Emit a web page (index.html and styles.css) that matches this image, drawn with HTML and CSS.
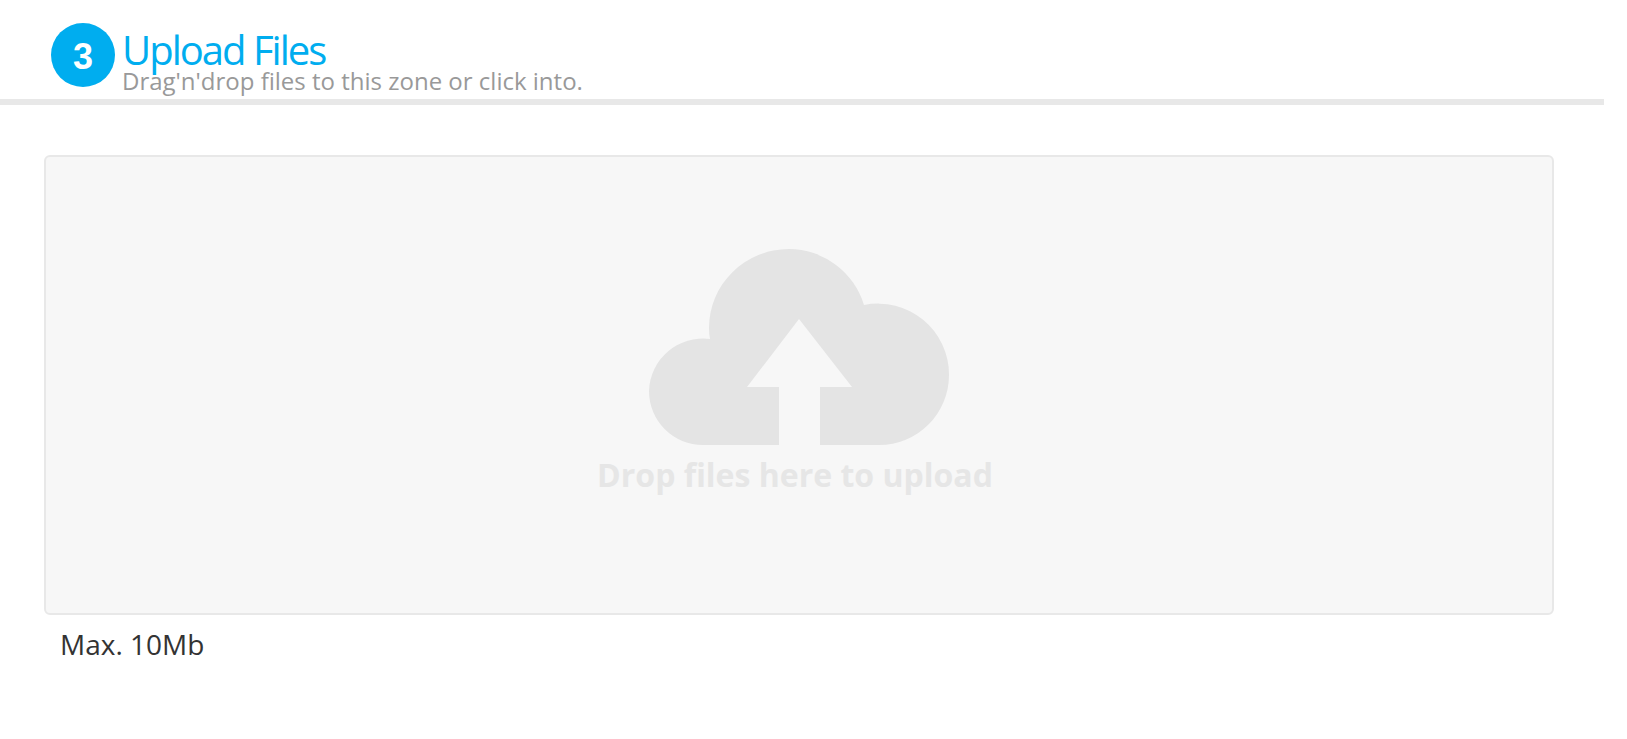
FILE: index.html
```html
<!DOCTYPE html>
<html lang="en">

<head>
    <meta charset="UTF-8">
    <meta name="viewport" content="width=device-width, initial-scale=1.0">
    <title>Upload Files</title>
    <link rel="stylesheet" href="styles.css">
</head>

<body>
    <section class="step">
        <header class="step-header">
            <span class="step-number">3</span>
            <div class="step-heading">
                <h2>Upload Files</h2>
                <p>Drag'n'drop files to this zone or click into.</p>
            </div>
        </header>
        <div class="step-body">
            <label class="dropzone" for="files">
                <input class="file-input" type="file" id="files" name="files" multiple>
                <svg class="cloud" viewBox="0 0 300 196" aria-hidden="true">
                    <path d="M54 196A54 54 0 0 1 0 142A54 54 0 0 1 61 90Q60 85 60 79A80 79 0 0 1 140 0A79 79 0 0 1 215 56A71 71 0 0 1 300 126A70 70 0 0 1 230 196H171V138H203L150 70L98 138H130V196Z"/>
                </svg>
                <span class="dropzone-text">Drop files here to upload</span>
            </label>
            <p class="hint">Max. 10Mb</p>
        </div>
    </section>
    <script>
        const dropzone = document.querySelector(".dropzone");
        const input = document.querySelector(".file-input");

        dropzone.addEventListener("dragover", (e) => e.preventDefault());
        dropzone.addEventListener("drop", (e) => {
            e.preventDefault();
            input.files = e.dataTransfer.files;
        });
    </script>
</body>

</html>
```
FILE: styles.css
```css
body {
    margin: 0;
    font-family: 'Open Sans', sans-serif;
    color: #333;
    background-color: #fff;
}

h2,
p {
    margin: 0;
}

.step {
    margin-right: 23px;
}

.step-header {
    display: flex;
    align-items: flex-start;
    gap: 7px;
    padding: 23px 51px 5px;
    border-bottom: 6px solid #e8e8e8;
}

.step-number {
    flex: none;
    box-sizing: border-box;
    width: 64px;
    height: 64px;
    padding-top: 2px;
    border-radius: 50%;
    font-family: 'Liberation Sans', sans-serif;
    font-size: 36px;
    font-weight: 700;
    line-height: 64px;
    text-align: center;
    color: #fff;
    background-color: #00adef;
}

.step-heading {
    padding-top: 9px;
}

.step-heading h2 {
    font-size: 40px;
    font-weight: 400;
    line-height: 36px;
    letter-spacing: -2px;
    color: #00adef;
}

.step-heading p {
    font-size: 24px;
    line-height: 26px;
    color: #999;
}

.step-body {
    padding: 50px 50px 0 44px;
}

.dropzone {
    display: flex;
    flex-direction: column;
    align-items: center;
    gap: 8px;
    padding: 92px 20px 116px;
    border: 2px solid #e8e8e8;
    border-radius: 6px;
    background-color: #f7f7f7;
    cursor: pointer;
}

.file-input {
    position: absolute;
    width: 1px;
    height: 1px;
    opacity: 0;
}

.cloud {
    width: 300px;
    fill: #e4e4e4;
}

.dropzone-text {
    padding-right: 8px;
    font-size: 32px;
    font-weight: 700;
    line-height: 44px;
    color: #e6e6e6;
}

.hint {
    padding: 11px 16px;
    font-size: 28px;
    line-height: 36px;
}
```
